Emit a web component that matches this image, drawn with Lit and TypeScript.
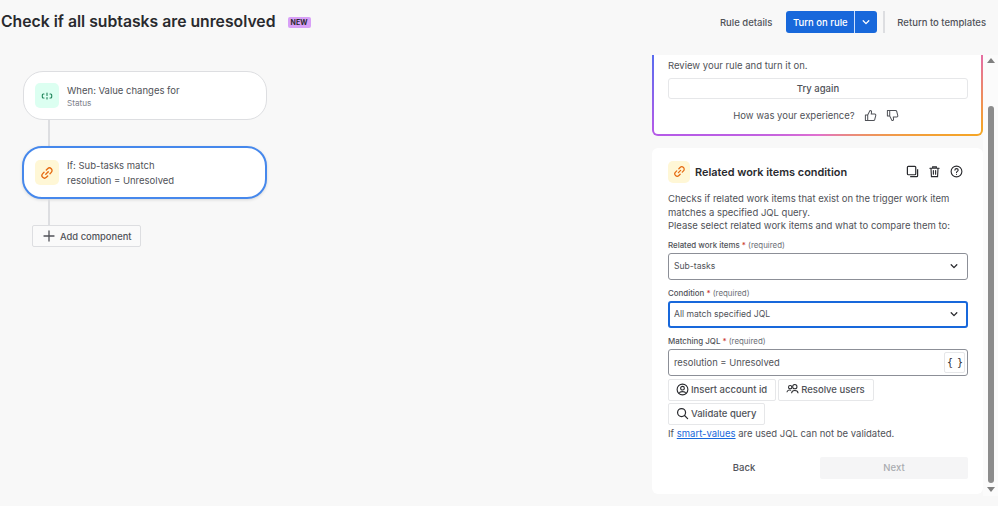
import { LitElement, html, css } from "lit";
import { customElement } from "lit/decorators.js";

const linkIcon = (s: number) => html`<svg width=${s} height=${s} viewBox="0 0 16 16" fill="none" stroke="#e56910" stroke-width="1.5" stroke-linecap="round"><path d="M6.6 9.4l2.8-2.8"/><path d="M7.2 4.6l1.5-1.5a2.9 2.9 0 0 1 4.2 4.2l-1.5 1.5"/><path d="M8.8 11.4l-1.5 1.5a2.9 2.9 0 0 1-4.2-4.2l1.5-1.5"/></svg>`;
const chevron = html`<svg width="12" height="12" viewBox="0 0 12 12" fill="none" stroke="#292a2e" stroke-width="1.3" stroke-linecap="round" stroke-linejoin="round"><path d="M3.2 4.8L6 7.6l2.800-2.800"/></svg>`;

@customElement("app-root")
export class AppRoot extends LitElement {
  static styles = css`
    :host { display: block; width: 998px; height: 506px; overflow: hidden; background: #f8f8f8; font-family: Inter, "Noto Sans", sans-serif; color: #505258; font-size: 9.5px; }
    .header { height: 55px; display: flex; align-items: center; padding: 0 12px 11px 1px; box-sizing: border-box; }
    h1 { margin: 0; font-size: 15.75px; font-weight: 600; color: #292a2e; line-height: 22px; white-space: nowrap; }
    .badge { margin-left: 12px; width: 23px; text-align: center; background: #d8a0f7; color: #292a2e; font-size: 7px; font-weight: 700; height: 11px; line-height: 11px; border-radius: 2px; }
    .spacer { flex: 1; }
    .link { font-size: 9.5px; font-weight: 500; color: #505258; white-space: nowrap; }
    .split { margin-left: 14px; display: flex; height: 22px; border-radius: 3px; background: #1868db; color: #fff; font-weight: 500; font-size: 9.5px; }
    .split span { width: 69px; display: flex; align-items: center; justify-content: center; border-right: 1px solid #cfe1fd; box-sizing: border-box; white-space: nowrap; }
    .split i { width: 22px; display: flex; align-items: center; justify-content: center; }
    .split svg { stroke: #fff; }
    .vr { width: 2px; height: 22px; background: #dddee1; margin: 0 12px 0 6px; }
    .main { display: flex; height: 441px; }
    .canvas { flex: 1; padding: 16px 0 0 22px; box-sizing: border-box; display: flex; flex-direction: column; align-items: flex-start; }
    .node { width: 245px; box-sizing: border-box; background: #fff; display: flex; align-items: center; gap: 8px; }
    .node1 { height: 49px; border: 1px solid #dddee1; border-radius: 20px; padding: 0 11px; margin-left: 1px; width: 244px; }
    .node2 { height: 53px; border: 2px solid #4688ec; border-radius: 20px; padding: 0 11px; box-shadow: 0 1px 3px rgba(30,31,33,.15); }
    .ico { width: 24px; height: 25px; border-radius: 5px; display: flex; align-items: center; justify-content: center; flex: none; }
    .green { background: #dcfff1; }
    .yellow { background: #fff7d6; }
    .ntitle { font-size: 9.5px; line-height: 15px; color: #505258; }
    .nsub { font-size: 8.2px; line-height: 11px; color: #7d818a; }
    .conn { width: 2px; height: 26px; background: #dddee1; margin-left: 26px; }
    .add { margin-left: 10px; width: 109px; height: 22px; box-sizing: border-box; border: 1px solid #dddee1; border-radius: 2px; display: flex; align-items: center; gap: 5px; padding-left: 10px; font-size: 9.4px; font-weight: 500; background: #fafafa; white-space: nowrap; }
    .side { width: 346px; display: flex; flex: none; }
    .col { width: 331px; flex: none; display: flex; flex-direction: column; gap: 12px; }
    .ai { height: 81px; box-sizing: border-box; border: solid transparent; border-width: 0 2px 2px 2px; border-radius: 0 0 6px 6px; padding: 0 13px 0 14px; text-align: center;
      background: linear-gradient(#fff,#fff) padding-box, conic-gradient(from 0deg at 50% 40%, #e56fa0 0deg, #e56fa0 80deg, #f5a623 105deg, #e070d0 180deg, #b45ae8 255deg, #4c6ff0 285deg, #e56fa0 360deg) border-box; }
    .ai p { margin: 4px 0 6px; text-align: left; line-height: 13px; }
    .try { height: 21px; border: 1px solid #e6e7e9; border-radius: 3px; display: flex; align-items: center; justify-content: center; font-weight: 500; font-size: 9.5px; box-sizing: border-box; }
    .exp { display: flex; align-items: center; justify-content: center; gap: 9px; margin-top: 8px; padding-right: 4px; height: 16px; }
    .card { height: 346px; background: #fff; border-radius: 6px; padding: 13px 15px 0 16px; box-sizing: border-box; }
    .chead { display: flex; align-items: center; height: 21px; }
    .chead .ico { width: 22px; height: 22px; border-radius: 5px; }
    .chead h2 { margin: 0 0 0 5px; font-size: 10.9px; font-weight: 600; color: #292a2e; flex: 1; white-space: nowrap; }
    .tools { display: flex; gap: 9px; align-items: center; padding-right: 5px; }
    .desc { margin: 10px 0 0; line-height: 13.5px; font-size: 9.5px; white-space: nowrap; }
    .lab { font-size: 7.9px; font-weight: 500; line-height: 12px; margin-top: 7px; margin-bottom: 2px; white-space: nowrap; color: #505258; }
    .lab b { color: #c9372c; font-weight: 500; }
    .lab em { font-style: normal; font-weight: 400; color: #6b6e76; }
    .field { height: 27px; box-sizing: border-box; border: 1px solid #8c8f97; border-radius: 3px; display: flex; align-items: center; padding: 0 7px 0 5px; font-size: 8.6px; color: #505258; justify-content: space-between; }
    .first { margin-top: 6px; }
    .focus { border: 2px solid #1868db; padding: 0 6px 0 4px; }
    .jql { padding-right: 2px; font-size: 9.4px; }
    .cbtn { width: 21px; height: 21px; border: 1px solid #e6e7e9; border-radius: 2px; display: flex; align-items: center; justify-content: center; font-family: "DejaVu Sans Mono", monospace; font-size: 10px; color: #292a2e; letter-spacing: -1px; box-sizing: border-box; }
    .btns { display: flex; gap: 2px; margin-top: 3px; }
    .btn { height: 22px; box-sizing: border-box; border: 1px solid #e6e7e9; border-radius: 2px; display: flex; align-items: center; gap: 2px; padding: 0 8px 0 7px; font-size: 9.5px; font-weight: 500; color: #505258; white-space: nowrap; }
    .btns + .btns { margin-top: 2px; }
    .note { margin: 2px 0 0; line-height: 14px; white-space: nowrap; font-size: 9.5px; }
    .note a { color: #1868db; text-decoration: underline; }
    .foot { display: flex; margin-top: 16px; height: 22px; align-items: center; font-weight: 500; font-size: 9.5px; }
    .foot span { flex: 1; text-align: center; }
    .foot .next { flex: none; width: 148px; height: 22px; line-height: 22px; background: #f5f5f6; color: #a9abaf; border-radius: 2px; }
    .bar { width: 15px; height: 441px; background: #fbfbfb; display: flex; flex-direction: column; align-items: center; box-sizing: border-box; padding: 3px 0 0; }
    .up { width: 0; height: 0; border: 4px solid transparent; border-top: 0; border-bottom: 5px solid #7f7f7f; }
    .thumb { width: 6px; height: 377px; background: #8c8c8c; border-radius: 3px; margin-top: 43px; }
    .down { width: 0; height: 0; border: 4px solid transparent; border-bottom: 0; border-top: 5px solid #7f7f7f; margin-top: 4px; }
  `;

  render() {
    return html`
      <div class="header">
        <h1>Check if all subtasks are unresolved</h1>
        <span class="badge">NEW</span>
        <span class="spacer"></span>
        <span class="link">Rule details</span>
        <div class="split"><span>Turn on rule</span><i>${chevron}</i></div>
        <div class="vr"></div>
        <span class="link">Return to templates</span>
      </div>
      <div class="main">
        <div class="canvas">
          <div class="node node1">
            <div class="ico green">
              <svg width="14" height="14" viewBox="0 0 14 14" fill="none" stroke="#1f845a" stroke-width="1.100" stroke-linecap="round"><path d="M4 5H3.300a1 1 0 0 0-1 1v2a1 1 0 0 0 1 1H4"/><path d="M10 5h.7a1 1 0 0 1 1 1v2a1 1 0 0 1-1 1H10"/><path d="M7 4v2.500M7 8.500V10"/></svg>
            </div>
            <div><div class="ntitle">When: Value changes for</div><div class="nsub">Status</div></div>
          </div>
          <div class="conn"></div>
          <div class="node node2">
            <div class="ico yellow">${linkIcon(14)}</div>
            <div class="ntitle">If: Sub-tasks match<br />resolution = Unresolved</div>
          </div>
          <div class="conn"></div>
          <div class="add">
            <svg width="12" height="12" viewBox="0 0 12 12" stroke="#505258" stroke-width="1.300" stroke-linecap="round"><path d="M6 1v10M1 6h10"/></svg>
            Add component
          </div>
        </div>
        <div class="side">
          <div class="col">
            <div class="ai">
              <p>Review your rule and turn it on.</p>
              <div class="try">Try again</div>
              <div class="exp">
                <span>How was your experience?</span>
                <svg width="13" height="13" viewBox="0 0 14 14"><path d="M1.500 6.500h2.500v6H1.500zM4 6.500l2.500-5c1.200 0 1.800.8 1.600 2L7.800 5.500h3.800c.8 0 1.300.7 1.100 1.400l-1.100 4.400c-.2.7-.7 1.200-1.400 1.200H4" fill="none" stroke="#505258" stroke-width="1.100" stroke-linejoin="round"/></svg>
                <svg width="13" height="13" viewBox="0 0 14 14"><path d="M1.500 7.500h2.500v-6H1.500zM4 7.500l2.500 5c1.200 0 1.800-.8 1.600-2L7.800 8.500h3.800c.8 0 1.300-.7 1.100-1.400L11.600 2.700c-.2-.7-.7-1.200-1.400-1.200H4" fill="none" stroke="#505258" stroke-width="1.100" stroke-linejoin="round"/></svg>
              </div>
            </div>
            <div class="card">
              <div class="chead">
                <div class="ico yellow">${linkIcon(13)}</div>
                <h2>Related work items condition</h2>
                <div class="tools">
                  <svg width="13" height="13" viewBox="0 0 14 14" fill="none" stroke="#292a2e" stroke-width="1.300"><rect x="1.500" y="1.500" width="9" height="9" rx="1" fill="#fff"/><path d="M12.500 4.500v7a1 1 0 0 1-1 1h-7"/></svg>
                  <svg width="13" height="13" viewBox="0 0 14 14" fill="none" stroke="#292a2e" stroke-width="1.200" stroke-linecap="round"><path d="M2 3.500h10M5 3.500V2h4v1.500M3.200 3.500l.5 9h6.600l.5-9M5.800 6v4M8.200 6v4"/></svg>
                  <svg width="13" height="13" viewBox="0 0 14 14" fill="none" stroke="#292a2e" stroke-width="1.200" stroke-linecap="round"><circle cx="7" cy="7" r="5.800"/><path d="M5.300 5.500c0-2.200 3.500-2.200 3.500 0 0 1.400-1.800 1.300-1.800 2.700"/><path d="M7 10.200v.1"/></svg>
                </div>
              </div>
              <p class="desc">Checks if related work items that exist on the trigger work item<br />matches a specified JQL query.<br />Please select related work items and what to compare them to:</p>
              <div class="lab first">Related work items <b>*</b> <em>(required)</em></div>
              <div class="field">Sub-tasks ${chevron}</div>
              <div class="lab">Condition <b>*</b> <em>(required)</em></div>
              <div class="field focus">All match specified JQL ${chevron}</div>
              <div class="lab">Matching JQL <b>*</b> <em>(required)</em></div>
              <div class="field jql">resolution = Unresolved <div class="cbtn">{ }</div></div>
              <div class="btns">
                <div class="btn">
                  <svg width="13" height="13" viewBox="0 0 14 14" fill="none" stroke="#292a2e" stroke-width="1.200"><circle cx="7" cy="7" r="5.800"/><circle cx="7" cy="5.600" r="2"/><path d="M3.300 11.200c1-2.600 6.400-2.600 7.400 0"/></svg>
                  Insert account id
                </div>
                <div class="btn">
                  <svg width="13" height="13" viewBox="0 0 14 14" fill="none" stroke="#292a2e" stroke-width="1.100"><circle cx="4.500" cy="4.500" r="1.800"/><circle cx="9.500" cy="4" r="2.300"/><path d="M1 10c.3-2.500 3-3 4.500-2M6 11c.3-3.800 6.700-3.800 7 0"/></svg>
                  Resolve users
                </div>
              </div>
              <div class="btns">
                <div class="btn">
                  <svg width="13" height="13" viewBox="0 0 14 14" fill="none" stroke="#292a2e" stroke-width="1.300" stroke-linecap="round"><circle cx="6" cy="6" r="4.300"/><path d="M9.200 9.200l3.300 3.300"/></svg>
                  Validate query
                </div>
              </div>
              <p class="note">If <a>smart-values</a> are used JQL can not be validated.</p>
              <div class="foot"><span>Back</span><span class="next">Next</span></div>
            </div>
          </div>
          <div class="bar"><div class="up"></div><div class="thumb"></div><div class="down"></div></div>
        </div>
      </div>
    `;
  }
}
